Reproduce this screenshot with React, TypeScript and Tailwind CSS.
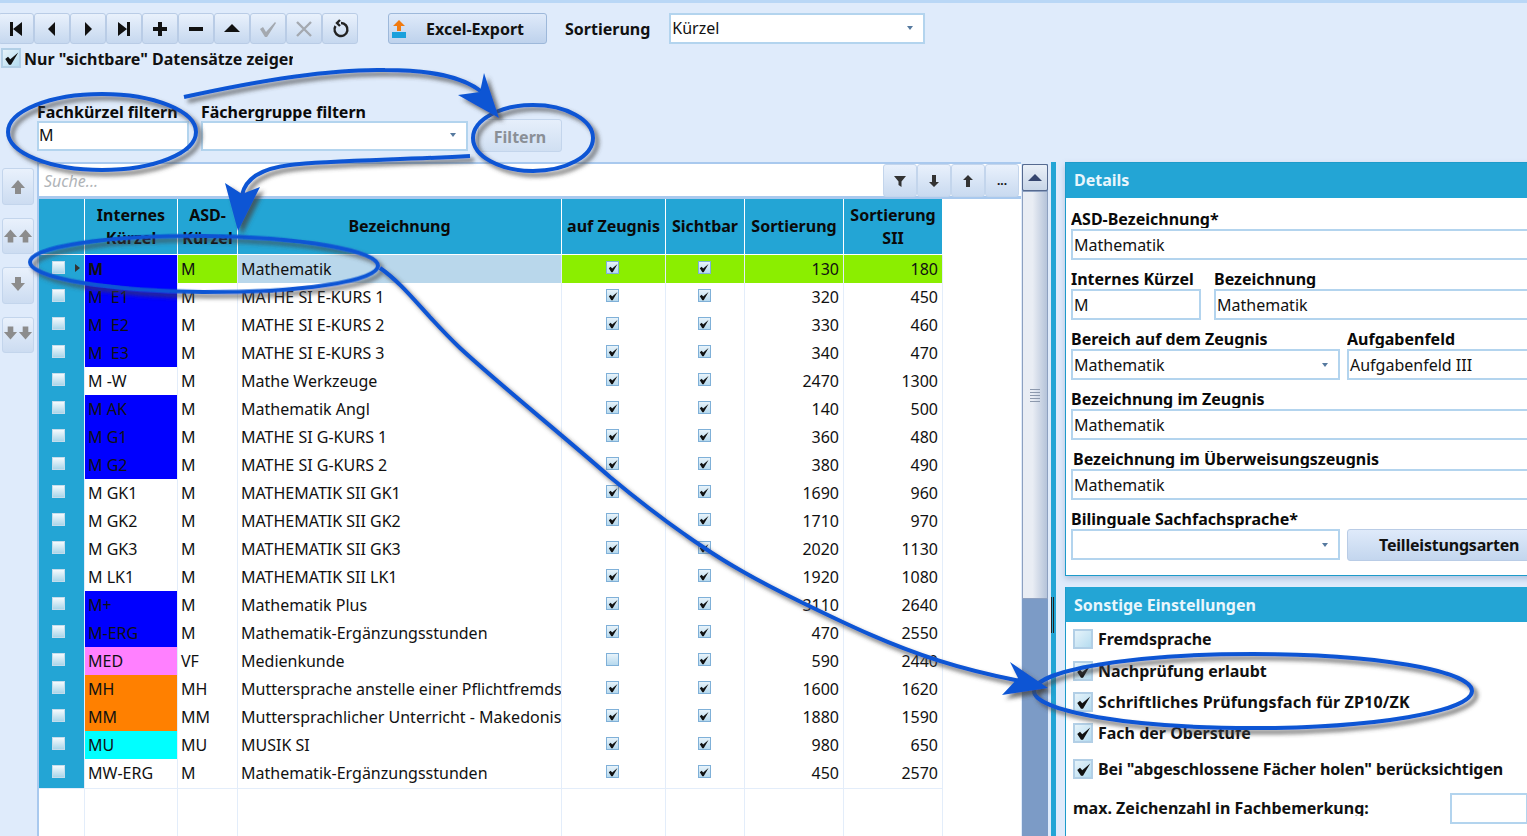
import React from "react";

const font = { fontFamily: '"Noto Sans", "Open Sans", Arial, sans-serif' };

type Row = {
  k: string;
  a: string;
  b: string;
  z: boolean;
  s1: number;
  s2: number;
  c?: string;
};

const rows: Row[] = [
  { k: "M", a: "M", b: "Mathematik", z: true, s1: 130, s2: 180, c: "bg-[#0000ff]" },
  { k: "M  E1", a: "M", b: "MATHE SI E-KURS 1", z: true, s1: 320, s2: 450, c: "bg-[#0000ff]" },
  { k: "M  E2", a: "M", b: "MATHE SI E-KURS 2", z: true, s1: 330, s2: 460, c: "bg-[#0000ff]" },
  { k: "M  E3", a: "M", b: "MATHE SI E-KURS 3", z: true, s1: 340, s2: 470, c: "bg-[#0000ff]" },
  { k: "M -W", a: "M", b: "Mathe Werkzeuge", z: true, s1: 2470, s2: 1300 },
  { k: "M AK", a: "M", b: "Mathematik Angl", z: true, s1: 140, s2: 500, c: "bg-[#0000ff]" },
  { k: "M G1", a: "M", b: "MATHE SI G-KURS 1", z: true, s1: 360, s2: 480, c: "bg-[#0000ff]" },
  { k: "M G2", a: "M", b: "MATHE SI G-KURS 2", z: true, s1: 380, s2: 490, c: "bg-[#0000ff]" },
  { k: "M GK1", a: "M", b: "MATHEMATIK SII GK1", z: true, s1: 1690, s2: 960 },
  { k: "M GK2", a: "M", b: "MATHEMATIK SII GK2", z: true, s1: 1710, s2: 970 },
  { k: "M GK3", a: "M", b: "MATHEMATIK SII GK3", z: true, s1: 2020, s2: 1130 },
  { k: "M LK1", a: "M", b: "MATHEMATIK SII LK1", z: true, s1: 1920, s2: 1080 },
  { k: "M+", a: "M", b: "Mathematik Plus", z: true, s1: 3110, s2: 2640, c: "bg-[#0000ff]" },
  { k: "M-ERG", a: "M", b: "Mathematik-Ergänzungsstunden", z: true, s1: 470, s2: 2550, c: "bg-[#0000ff]" },
  { k: "MED", a: "VF", b: "Medienkunde", z: false, s1: 590, s2: 2440, c: "bg-[#ff80ff]" },
  { k: "MH", a: "MH", b: "Muttersprache anstelle einer Pflichtfremdsprache", z: true, s1: 1600, s2: 1620, c: "bg-[#ff8000]" },
  { k: "MM", a: "MM", b: "Muttersprachlicher Unterricht - Makedonisch", z: true, s1: 1880, s2: 1590, c: "bg-[#ff8000]" },
  { k: "MU", a: "MU", b: "MUSIK SI", z: true, s1: 980, s2: 650, c: "bg-[#00ffff]" },
  { k: "MW-ERG", a: "M", b: "Mathematik-Ergänzungsstunden", z: true, s1: 450, s2: 2570 },
];

const COLS = "grid grid-cols-[46px_93px_60px_324px_104px_79px_99px_99px]";

function Tick({ size = 11 }: { size?: number }) {
  return (
    <svg width={size} height={size} viewBox="0 0 12 12">
      <path d="M1 6.4 L3.2 4.6 L5 6.6 L11.4 1.2 L5.6 11 L4 11 Z" fill="#111" />
    </svg>
  );
}

function MiniCheck({ on, dim }: { on: boolean; dim?: boolean }) {
  return (
    <span
      className={`flex h-[13px] w-[13px] items-center justify-center border bg-gradient-to-b ${
        dim ? "border-[#c5dceb] from-[#f4fafd] to-[#a9d6ea]" : "border-[#7fb0d8] from-[#e8f3fa] to-[#b6d9ee]"
      }`}
    >
      {on && <Tick size={10} />}
    </span>
  );
}

function BigCheck({ on = true }: { on?: boolean }) {
  return (
    <span className="flex h-[20px] w-[20px] shrink-0 items-center justify-center border-2 border-[#b2cfe6] bg-gradient-to-br from-[#e6f3fa] to-[#b5dcf0]">
      {on && <Tick size={15} />}
    </span>
  );
}

function Caret() {
  return <span className="h-0 w-0 border-x-[3px] border-t-[4px] border-x-transparent border-t-[#55799f]" />;
}

function Label({ children, className = "" }: { children: React.ReactNode; className?: string }) {
  return (
    <div className={`mb-[1px] h-[17px] overflow-hidden whitespace-nowrap text-[16px] font-bold leading-[17px] text-[#0a0a0a] ${className}`}>
      {children}
    </div>
  );
}

function Field({
  value,
  caret,
  short,
  className = "",
}: {
  value?: string;
  caret?: boolean;
  short?: boolean;
  className?: string;
}) {
  return (
    <div
      className={`flex items-center justify-between overflow-hidden whitespace-nowrap border-2 border-[#b3d4ee] bg-white pr-[10px] text-[16px] leading-[20px] text-[#111] ${
        short ? "-mt-[1px] h-[30px] pb-[3px]" : "h-[31px]"
      } ${className}`}
    >
      <span>{value}</span>
      {caret && <Caret />}
    </div>
  );
}

function ToolBtn({ d, fill = "#111", sw }: { d: string; fill?: string; sw?: number }) {
  return (
    <button className="flex h-[31px] w-[36px] items-center justify-center rounded-[3px] border border-[#b9cce6] bg-gradient-to-b from-[#e9f1fc] to-[#c6d8ef]">
      <svg width="20" height="20" viewBox="0 0 20 20">
        {sw ? <path d={d} fill="none" stroke={fill} strokeWidth={sw} /> : <path d={d} fill={fill} />}
      </svg>
    </button>
  );
}

function SideBtn({ double, down, h }: { double?: boolean; down?: boolean; h: string }) {
  const arrow = "M8 1 L15 9 H11 V15 H5 V9 H1 Z";
  return (
    <button
      className={`flex w-[32px] items-center justify-center rounded-[3px] border border-[#c3d5ec] bg-gradient-to-b from-[#e9f1fc] to-[#ccdcf1] ${h} ${
        down ? "pb-[4px]" : ""
      }`}
    >
      {[...(double ? [0, 1] : [0])].map((i) => (
        <svg key={i} width="16" height="16" viewBox="0 0 16 16" className={down ? "rotate-180" : ""}>
          <path d={arrow} fill="#8c8c8c" />
        </svg>
      ))}
    </button>
  );
}

function SearchBtn({ children }: { children: React.ReactNode }) {
  return (
    <button className="flex h-[33px] w-[34px] items-center justify-center rounded-[3px] border border-[#c3d5ec] bg-gradient-to-b from-[#e9f1fc] to-[#c9daf0]">
      {children}
    </button>
  );
}

function Annotations() {
  return (
    <svg className="pointer-events-none absolute left-0 top-0" width="1527" height="836" viewBox="0 0 1527 836">
      <defs>
        <filter id="sh" x="-20%" y="-20%" width="140%" height="140%">
          <feDropShadow dx="4" dy="4" stdDeviation="2" floodColor="#444" floodOpacity="0.75" />
        </filter>
      </defs>
      <g filter="url(#sh)" fill="none" stroke="#0a55d4" strokeWidth="4">
        <ellipse cx="102" cy="132" rx="94" ry="38" />
        <ellipse cx="533" cy="138" rx="60" ry="33" />
        <ellipse cx="204" cy="264" rx="174" ry="28" transform="rotate(0.6 204 264)" />
        <ellipse cx="1253" cy="691" rx="219" ry="37" />
        <path d="M184 97 C270 78 340 69 385 70 C430 70 462 76 482 92" />
        <path d="M470 156 C400 160 330 160 290 165 C265 168 246 176 242 195" />
        <path d="M380 268 C405 285 425 315 460 348 C500 385 560 433 610 477 C640 502 670 525 703 547 C735 569 770 587 803 603 C848 625 890 645 937 660 C965 669 990 675 1020 681" />
      </g>
      <g filter="url(#sh)" fill="#0a55d4">
        <path d="M484 73 L499 118 L458 95 L480 92 Z" />
        <path d="M225 183 L238 231 L260 187 L242 194 Z" />
        <path d="M1010 662 L1048 688 L1002 695 L1018 678 Z" />
      </g>
    </svg>
  );
}

export default function App() {
  return (
    <div style={font} className="relative flex h-[836px] w-[1527px] flex-col overflow-hidden bg-[#dfebfb] text-[16px] text-[#111]">
      <div className="h-[3px] bg-[#b9d7f6]" />

      {/* toolbar */}
      <div className="ml-[-2px] mt-[10px] flex h-[31px] items-center">
        <ToolBtn d="M4 3 H7 V17 H4 Z M16 3 V17 L7 10 Z" />
        <ToolBtn d="M13 3 V17 L6 10 Z" />
        <ToolBtn d="M7 3 V17 L14 10 Z" />
        <ToolBtn d="M4 3 V17 L13 10 Z M13 3 H16 V17 H13 Z" />
        <ToolBtn d="M8 3 H12 V8 H17 V12 H12 V17 H8 V12 H3 V8 H8 Z" />
        <ToolBtn d="M3 8 H17 V12 H3 Z" />
        <ToolBtn d="M10 5 L18 13 H2 Z" />
        <ToolBtn d="M2 10 L5 8 L8 13 L17 3 L18 4 L9 18 H7 Z" fill="#a4a9b0" />
        <ToolBtn d="M3 3 L17 17 M17 3 L3 17" fill="#a4a9b0" sw={2.4} />
        <ToolBtn d="M11 4 A6.5 6.5 0 1 1 5.5 7 M10 1 L7 4 L10 7" fill="#222" sw={2.4} />
        <button className="ml-[30px] flex h-[31px] w-[159px] items-center rounded-[3px] border border-[#9db8da] bg-gradient-to-b from-[#dfeafa] to-[#bed2ec]">
          <svg width="16" height="20" viewBox="0 0 16 20" className="ml-[2px]">
            <path d="M8 1 L14 7 H10 V12 H6 V7 H2 Z" fill="#f07a10" />
            <path d="M1 13 H15 V19 H1 Z" fill="#1aa0dc" />
          </svg>
          <span className="ml-[19px] font-bold leading-none">Excel-Export</span>
        </button>
        <span className="ml-[18px] font-bold leading-none">Sortierung</span>
        <div className="ml-[19px] w-[256px]">
          <Field value="Kürzel" caret className="pb-[2px] pl-[1px]" />
        </div>
      </div>

      {/* only visible */}
      <div className="mt-[5px] flex h-[18px] items-center pl-[1px]">
        <BigCheck />
        <span className="ml-[3px] w-[269px] overflow-hidden whitespace-nowrap pt-[1px] font-bold leading-[20px]">Nur "sichtbare" Datensätze zeigen</span>
      </div>

      {/* filters */}
      <div className="mt-[37px] flex items-end pl-[37px]">
        <div className="w-[152px]">
          <Label>Fachkürzel filtern</Label>
          <Field value="M" short />
        </div>
        <div className="ml-[12px] w-[267px]">
          <Label>Fächergruppe filtern</Label>
          <Field caret short />
        </div>
        <button className="mb-[-1px] ml-[10px] h-[33px] w-[84px] rounded-[3px] border border-[#c3d5ec] bg-gradient-to-b from-[#e6effb] to-[#d0dff2] pt-[2px] font-bold text-[#8a8f96]">
          Filtern
        </button>
      </div>

      {/* main */}
      <div className="mt-[11px] flex min-h-0 flex-1">
        {/* side buttons */}
        <div className="flex w-[37px] shrink-0 flex-col gap-[13px] pl-[2px] pt-[6px]">
          <SideBtn h="h-[37px]" />
          <SideBtn h="h-[36px]" double />
          <SideBtn h="h-[37px]" down />
          <SideBtn h="h-[36px]" down double />
        </div>

        {/* table */}
        <div className="flex w-[984px] shrink-0 flex-col border-l-2 border-[#a9c9ee] bg-white">
          <div className="flex h-[37px] shrink-0 border-b-[3px] border-t-2 border-[#a9c9ee] bg-white">
            <div className="flex-1 pl-[5px] text-[16px] italic leading-[35px] text-[#b0b4b8]">Suche...</div>
            <div className="flex pr-[2px]">
              <SearchBtn>
                <svg width="14" height="14" viewBox="0 0 14 14"><path d="M1 2 H13 L8.5 7.5 V13 L5.5 11 V7.5 Z" fill="#333" /></svg>
              </SearchBtn>
              <SearchBtn>
                <svg width="14" height="14" viewBox="0 0 14 14"><path d="M5 1 H9 V8 H12 L7 13 L2 8 H5 Z" fill="#333" /></svg>
              </SearchBtn>
              <SearchBtn>
                <svg width="14" height="14" viewBox="0 0 14 14"><path d="M5 13 H9 V6 H12 L7 1 L2 6 H5 Z" fill="#333" /></svg>
              </SearchBtn>
              <SearchBtn>
                <span className="text-[12px] font-bold leading-none">...</span>
              </SearchBtn>
            </div>
          </div>

          <div className="flex min-h-0 flex-1 flex-col">
            {/* header */}
            <div className={`${COLS} h-[56px] w-[904px] shrink-0 border-b border-white text-center text-[16px] font-bold leading-[23px] text-[#0a0a0a]`}>
              {["", "Internes Kürzel", "ASD-Kürzel", "Bezeichnung", "auf Zeugnis", "Sichtbar", "Sortierung", "Sortierung SII"].map((h, i) => (
                <div key={i} className="flex items-center justify-center overflow-hidden border-r border-white bg-[#23a5d5] px-[4px]">
                  {h}
                </div>
              ))}
            </div>

            {/* rows */}
            {rows.map((r, i) => {
              const sel = i === 0;
              const green = sel ? "bg-[#8bee00]" : "bg-white";
              return (
                <div key={r.k} className={`${COLS} h-[28px] w-[904px] shrink-0 leading-[29px]`}>
                  <div className="relative flex items-start justify-start border-b border-r border-[#e3edfa] bg-[#23a5d5] pl-[13px] pt-[6px]">
                    <MiniCheck on={false} dim />
                    {sel && <span className="absolute left-[36px] top-[9px] h-0 w-0 border-y-[4px] border-l-[5px] border-y-transparent border-l-[#333]" />}
                  </div>
                  <div className={`overflow-hidden whitespace-pre border-b border-r border-[#e3edfa] px-[3px] ${r.c ?? "bg-white"} ${sel ? "font-bold" : ""}`}>
                    {r.k}
                  </div>
                  <div className={`overflow-hidden border-b border-r border-[#e3edfa] px-[3px] ${sel ? "bg-[#8bee00]" : "bg-white"}`}>{r.a}</div>
                  <div className={`overflow-hidden whitespace-nowrap border-b border-r border-[#e3edfa] pl-[3px] ${sel ? "bg-[#b9d7eb]" : "bg-white"}`}>{r.b}</div>
                  <div className={`flex justify-center border-b border-r border-[#e3edfa] pr-[2px] pt-[6px] ${green}`}>
                    <MiniCheck on={r.z} />
                  </div>
                  <div className={`flex justify-center border-b border-r border-[#e3edfa] pr-[2px] pt-[6px] ${green}`}>
                    <MiniCheck on />
                  </div>
                  <div className={`border-b border-r border-[#e3edfa] pr-[4px] text-right ${green}`}>{r.s1}</div>
                  <div className={`border-b border-r border-[#e3edfa] pr-[4px] text-right ${green}`}>{r.s2}</div>
                </div>
              );
            })}

            {/* filler */}
            <div className={`${COLS} w-[904px] flex-1`}>
              {[0, 1, 2, 3, 4, 5, 6, 7].map((i) => (
                <div key={i} className="border-r border-[#e3edfa]" />
              ))}
            </div>
          </div>
        </div>

        {/* scrollbar */}
        <div className="ml-[1px] mt-[2px] flex w-[26px] shrink-0 flex-col bg-[#7c9bc6]">
          <div className="flex h-[27px] shrink-0 items-center justify-center rounded-[2px] border border-[#566a90] bg-gradient-to-b from-[#eaf0f8] to-[#c8d6e8]">
            <span className="h-0 w-0 border-x-[7px] border-b-[7px] border-x-transparent border-b-[#36466f]" />
          </div>
          <div className="flex h-[408px] shrink-0 flex-col items-center justify-center gap-[2px] border border-[#8da0c0] bg-gradient-to-r from-[#e9edf4] from-40% to-[#b5c3d9]">
            <span className="h-px w-[10px] bg-[#8d99ad]" />
            <span className="h-px w-[10px] bg-[#8d99ad]" />
            <span className="h-px w-[10px] bg-[#8d99ad]" />
            <span className="h-px w-[10px] bg-[#8d99ad]" />
            <span className="h-px w-[10px] bg-[#8d99ad]" />
          </div>
        </div>

        {/* splitter */}
        <div className="ml-[3px] flex w-[5px] shrink-0 items-start bg-[#23a5d5] pt-[435px]">
          <span className="h-[36px] w-[3px] border-x border-[#222]" />
        </div>

        {/* right panels */}
        <div className="ml-[9px] flex w-[480px] shrink-0 flex-col gap-[11px]">
          <section className="h-[414px] shrink-0 border border-[#1d9bca] bg-white shadow-[0_3px_6px_rgba(90,120,170,0.35)]">
            <h2 className="flex h-[35px] items-center bg-[#23a5d5] pb-[2px] pl-[8px] text-[16px] font-bold text-[#e9f6fc]">Details</h2>
            <div className="pl-[5px] pt-[13px]">
              <Label>ASD-Bezeichnung*</Label>
              <Field value="Mathematik" className="pl-[1px]" />
              <div className="mt-[11px] flex">
                <div className="w-[130px]">
                  <Label>Internes Kürzel</Label>
                  <Field value="M" className="pl-[1px]" />
                </div>
                <div className="ml-[13px] flex-1">
                  <Label>Bezeichnung</Label>
                  <Field value="Mathematik" className="pl-[1px]" />
                </div>
              </div>
              <div className="mt-[11px] flex">
                <div className="w-[269px]">
                  <Label>Bereich auf dem Zeugnis</Label>
                  <Field value="Mathematik" caret className="pl-[1px]" />
                </div>
                <div className="ml-[7px] flex-1">
                  <Label>Aufgabenfeld</Label>
                  <Field value="Aufgabenfeld III" className="pl-[1px]" />
                </div>
              </div>
              <Label className="mt-[11px]">Bezeichnung im Zeugnis</Label>
              <Field value="Mathematik" className="pl-[1px]" />
              <Label className="mt-[11px] pl-[2px]">Bezeichnung im Überweisungszeugnis</Label>
              <Field value="Mathematik" className="pl-[1px]" />
              <div className="mt-[11px] flex items-start">
                <div className="w-[269px]">
                  <Label>Bilinguale Sachfachsprache*</Label>
                  <Field caret />
                </div>
                <button className="ml-[7px] mt-[18px] flex h-[32px] flex-1 items-center rounded-[3px] border border-[#b9cce6] bg-gradient-to-b from-[#dfeafa] to-[#c3d6ee] pl-[31px] font-bold leading-none tracking-[-0.2px]">
                  Teilleistungsarten
                </button>
              </div>
            </div>
          </section>

          <section className="min-h-0 flex-1 border-l border-[#1d9bca] bg-white">
            <h2 className="flex h-[35px] items-center bg-[#23a5d5] pl-[8px] text-[16px] font-bold text-[#e9f6fc]">Sonstige Einstellungen</h2>
            <div className="flex flex-col pl-[7px] font-bold leading-[20px]">
              <div className="mt-[7px] flex h-[20px] items-center gap-[5px]"><BigCheck on={false} /><span>Fremdsprache</span></div>
              <div className="mt-[12px] flex h-[20px] items-center gap-[5px]"><BigCheck /><span>Nachprüfung erlaubt</span></div>
              <div className="mt-[11px] flex h-[20px] items-center gap-[5px]"><BigCheck /><span className="tracking-[0.16px]">Schriftliches Prüfungsfach für ZP10/ZK</span></div>
              <div className="mt-[11px] flex h-[20px] items-center gap-[5px]"><BigCheck /><span>Fach der Oberstufe</span></div>
              <div className="mt-[16px] flex h-[20px] items-center gap-[5px]"><BigCheck /><span className="tracking-[-0.1px]">Bei "abgeschlossene Fächer holen" berücksichtigen</span></div>
              <div className="mt-[14px] flex h-[30px] items-center">
                <span className="mb-[2px] h-[18px] w-[377px] overflow-hidden whitespace-nowrap">max. Zeichenzahl in Fachbemerkung:</span>
                <Field className="w-[78px]" />
              </div>
            </div>
          </section>
        </div>
      </div>

      <Annotations />
    </div>
  );
}
